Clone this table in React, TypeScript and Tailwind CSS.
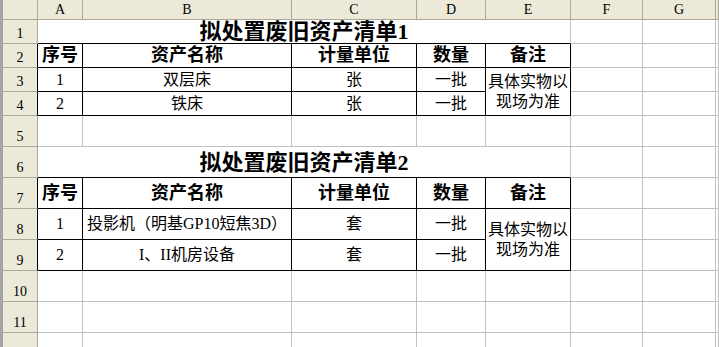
import React from 'react';
import clsx from 'clsx';

const FONT = "font-['Liberation_Serif','Noto_Sans_CJK_SC',serif]";

interface CellProps {
  children?: React.ReactNode;
  rb?: boolean;
  bb?: boolean;
  className?: string;
}

const Cell: React.FC<CellProps> = ({ children, rb, bb, className }) => (
  <div
    className={clsx(
      'flex items-center justify-center overflow-hidden whitespace-nowrap border-r border-b bg-white text-black',
      rb ? 'border-r-black' : 'border-r-[#c0c0c0]',
      bb ? 'border-b-black' : 'border-b-[#c0c0c0]',
      className
    )}
  >
    {children}
  </div>
);

const RowHead: React.FC<{ n?: number; dark?: boolean }> = ({ n, dark }) => (
  <div
    className={clsx(
      "flex items-end justify-center pb-[2px] bg-[#ece9d8] border-l-[3px] border-l-[#a3a3a3] border-r border-b border-b-[#aca899] text-[14px] leading-none font-['Liberation_Serif',serif]",
      dark ? 'border-r-black' : 'border-r-[#aca899]'
    )}
  >
    {n}
  </div>
);

const ColHead: React.FC<{ label?: string }> = ({ label }) => (
  <div className="flex items-center justify-center bg-[#ece9d8] border-r border-b border-[#aca899] text-[14px] leading-none font-['Liberation_Serif',serif]">
    {label}
  </div>
);

// F, G and the sliver of H on the right
const Rest: React.FC = () => (
  <>
    <Cell />
    <Cell />
    <Cell />
  </>
);

const Blank: React.FC = () => (
  <>
    <Cell />
    <Cell />
    <Cell />
    <Cell />
    <Cell />
  </>
);

const Header: React.FC = () => (
  <>
    <Cell rb bb className="text-[18px] font-bold">序号</Cell>
    <Cell rb bb className="text-[18px] font-bold">资产名称</Cell>
    <Cell rb bb className="text-[18px] font-bold">计量单位</Cell>
    <Cell rb bb className="text-[18px] font-bold">数量</Cell>
    <Cell rb bb className="text-[18px] font-bold">备注</Cell>
  </>
);

const Note: React.FC = () => (
  <Cell rb bb className="row-span-2 flex-col text-[16px] leading-[20px]">
    <span>具体实物以</span>
    <span>现场为准</span>
  </Cell>
);

export default function App() {
  return (
    <div className={clsx('h-[347px] w-[719px] overflow-hidden bg-white', FONT)}>
      <div className="grid grid-cols-[38px_45px_209px_125px_69px_85px_72px_73px_1fr] grid-rows-[20px_24px_24px_24px_24px_31px_31px_31px_31px_31px_31px_31px_31px]">
        {/* column headers */}
        <div className="bg-[#ece9d8] border-l-[3px] border-l-[#a3a3a3] border-r border-b border-r-[#aca899] border-b-[#aca899]" />
        {['A', 'B', 'C', 'D', 'E', 'F', 'G', ''].map((c, i) => (
          <ColHead key={i} label={c} />
        ))}

        {/* row 1 */}
        <RowHead n={1} />
        <Cell bb className="col-span-5 text-[22px] font-bold">拟处置废旧资产清单1</Cell>
        <Rest />

        {/* row 2 */}
        <RowHead n={2} dark />
        <Header />
        <Rest />

        {/* row 3 */}
        <RowHead n={3} dark />
        <Cell rb bb className="text-[16px]">1</Cell>
        <Cell rb bb className="text-[16px]">双层床</Cell>
        <Cell rb bb className="text-[16px]">张</Cell>
        <Cell rb bb className="text-[16px]">一批</Cell>
        <Note />
        <Rest />

        {/* row 4 */}
        <RowHead n={4} dark />
        <Cell rb bb className="text-[16px]">2</Cell>
        <Cell rb bb className="text-[16px]">铁床</Cell>
        <Cell rb bb className="text-[16px]">张</Cell>
        <Cell rb bb className="text-[16px]">一批</Cell>
        <Rest />

        {/* row 5 */}
        <RowHead n={5} />
        <Blank />
        <Rest />

        {/* row 6 */}
        <RowHead n={6} />
        <Cell bb className="col-span-5 text-[22px] font-bold">拟处置废旧资产清单2</Cell>
        <Rest />

        {/* row 7 */}
        <RowHead n={7} dark />
        <Header />
        <Rest />

        {/* row 8 */}
        <RowHead n={8} dark />
        <Cell rb bb className="text-[16px]">1</Cell>
        <Cell rb bb className="text-[16px]">投影机（明基GP10短焦3D）</Cell>
        <Cell rb bb className="text-[16px]">套</Cell>
        <Cell rb bb className="text-[16px]">一批</Cell>
        <Note />
        <Rest />

        {/* row 9 */}
        <RowHead n={9} dark />
        <Cell rb bb className="text-[16px]">2</Cell>
        <Cell rb bb className="text-[16px]">I、II机房设备</Cell>
        <Cell rb bb className="text-[16px]">套</Cell>
        <Cell rb bb className="text-[16px]">一批</Cell>
        <Rest />

        {/* rows 10 - 12 (12 is only partly in view, its number sits below the fold) */}
        <RowHead n={10} />
        <Blank />
        <Rest />
        <RowHead n={11} />
        <Blank />
        <Rest />
        <RowHead />
        <Blank />
        <Rest />
      </div>
    </div>
  );
}
